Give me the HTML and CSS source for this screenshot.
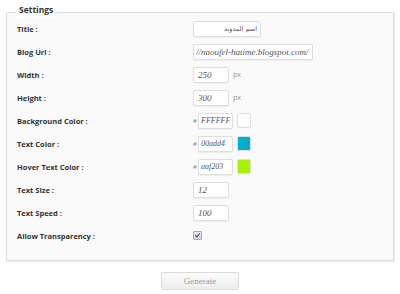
FILE: index.html
```html
<!DOCTYPE html>
<html lang="en">
<head>
	<meta charset="UTF-8">
	<title>Settings</title>
	<link rel="stylesheet" href="styles.css">
</head>
<body>
	<!-- settings panel -->
	<div class="panel">
		<span class="panel-title">Settings</span>
		<div class="row">
			<label>Title :</label>
			<div class="field"><input type="text" class="txt w-title" dir="rtl" value="اسم المدونة"></div>
		</div>
		<div class="row">
			<label>Blog Url :</label>
			<div class="field"><input type="text" class="txt w-url" value="//naoufel-hatime.blogspot.com/"></div>
		</div>
		<div class="row">
			<label>Width :</label>
			<div class="field"><input type="text" class="txt w-num" value="250"><span class="unit">px</span></div>
		</div>
		<div class="row">
			<label>Height :</label>
			<div class="field"><input type="text" class="txt w-num" value="300"><span class="unit">px</span></div>
		</div>
		<div class="row">
			<label>Background Color :</label>
			<div class="field"><span class="hash">#</span><input type="text" class="txt w-color" value="FFFFFF"><span class="swatch sw-white"></span></div>
		</div>
		<div class="row">
			<label>Text Color :</label>
			<div class="field"><span class="hash">#</span><input type="text" class="txt w-color" value="00add4"><span class="swatch sw-blue"></span></div>
		</div>
		<div class="row">
			<label>Hover Text Color :</label>
			<div class="field"><span class="hash">#</span><input type="text" class="txt w-color" value="aaf203"><span class="swatch sw-green"></span></div>
		</div>
		<div class="row">
			<label>Text Size :</label>
			<div class="field"><input type="text" class="txt w-num" value="12"></div>
		</div>
		<div class="row">
			<label>Text Speed :</label>
			<div class="field"><input type="text" class="txt w-num" value="100"></div>
		</div>
		<div class="row">
			<label>Allow Transparency :</label>
			<div class="field"><input type="checkbox" class="chk" checked></div>
		</div>
	</div>
	<div class="actions">
		<button class="btn">Generate</button>
	</div>
</body>
</html>
```

FILE: styles.css
```css
*{
	margin: 0;
	box-sizing: border-box;
}
body{
	background: #fff;
	font-family: "Open Sans", "Liberation Sans", sans-serif;
}
.panel{
	position: relative;
	margin: 12px 0 0 6px;
	width: 388px;
	height: 249px;
	padding: 4px 0 0 10px;
	background: #fafafa;
	border: 1px solid #dcdcdc;
	box-shadow: 1px 1px 0 #ececec;
}
.panel-title{
	position: absolute;
	top: -11px;
	left: 9px;
	padding: 0 3px;
	background: #fff;
	font-size: 8.5px;
	font-weight: bold;
	line-height: 16px;
	color: #333;
}
.row{
	display: grid;
	grid-template-columns: 176px auto;
	align-items: center;
	height: 23px;
}
label{
	font-size: 7.5px;
	font-weight: bold;
	color: #333;
}
.field{
	display: flex;
	align-items: center;
}
.txt{
	height: 16px;
	padding: 0 3px;
	border: 1px solid #dedede;
	border-radius: 2px;
	background: #fff;
	box-shadow: 0 1px 1px rgba(0,0,0,.05);
	font-family: "Liberation Serif", "DejaVu Serif", serif;
	font-style: italic;
	font-size: 9px;
	color: #555;
	outline: none;
}
.w-title{
	width: 68px;
	font-family: "DejaVu Sans", sans-serif;
	font-style: normal;
	font-size: 6.5px;
}
.w-url{
	width: 120px;
	padding: 0 2px;
}
.w-num{
	width: 36px;
	padding: 0 4px;
}
.w-color{
	width: 35px;
	padding: 0 2px;
	font-size: 8px;
}
.unit{
	margin-left: 4px;
	font-size: 7px;
	color: #999;
}
.hash{
	width: 5px;
	font-size: 6px;
	color: #888;
}
.swatch{
	width: 14px;
	height: 15px;
	margin-left: 4px;
	border: 1px solid #dedede;
	border-radius: 2px;
}
.sw-white{
	background: #fff;
}
.sw-blue{
	background: #00add4;
}
.sw-green{
	background: #aaf203;
}
.chk{
	appearance: none;
	position: relative;
	width: 9px;
	height: 9px;
	margin: 0;
	border: 1px solid #a8a8a8;
	border-radius: 1px;
	background: linear-gradient(#f0f0f0, #d8d8d8);
}
.chk:checked::after{
	content: "";
	position: absolute;
	left: 2px;
	top: 0;
	width: 2px;
	height: 4px;
	border: solid #2a3a9a;
	border-width: 0 1px 1px 0;
	transform: rotate(40deg);
}
.actions{
	display: flex;
	justify-content: center;
	padding-top: 11px;
}
.btn{
	width: 78px;
	height: 18px;
	border: 1px solid #dcdcdc;
	border-radius: 2px;
	background: linear-gradient(#fdfdfd, #ededed);
	font-family: "Liberation Serif", serif;
	font-size: 9px;
	color: #999;
}
```
